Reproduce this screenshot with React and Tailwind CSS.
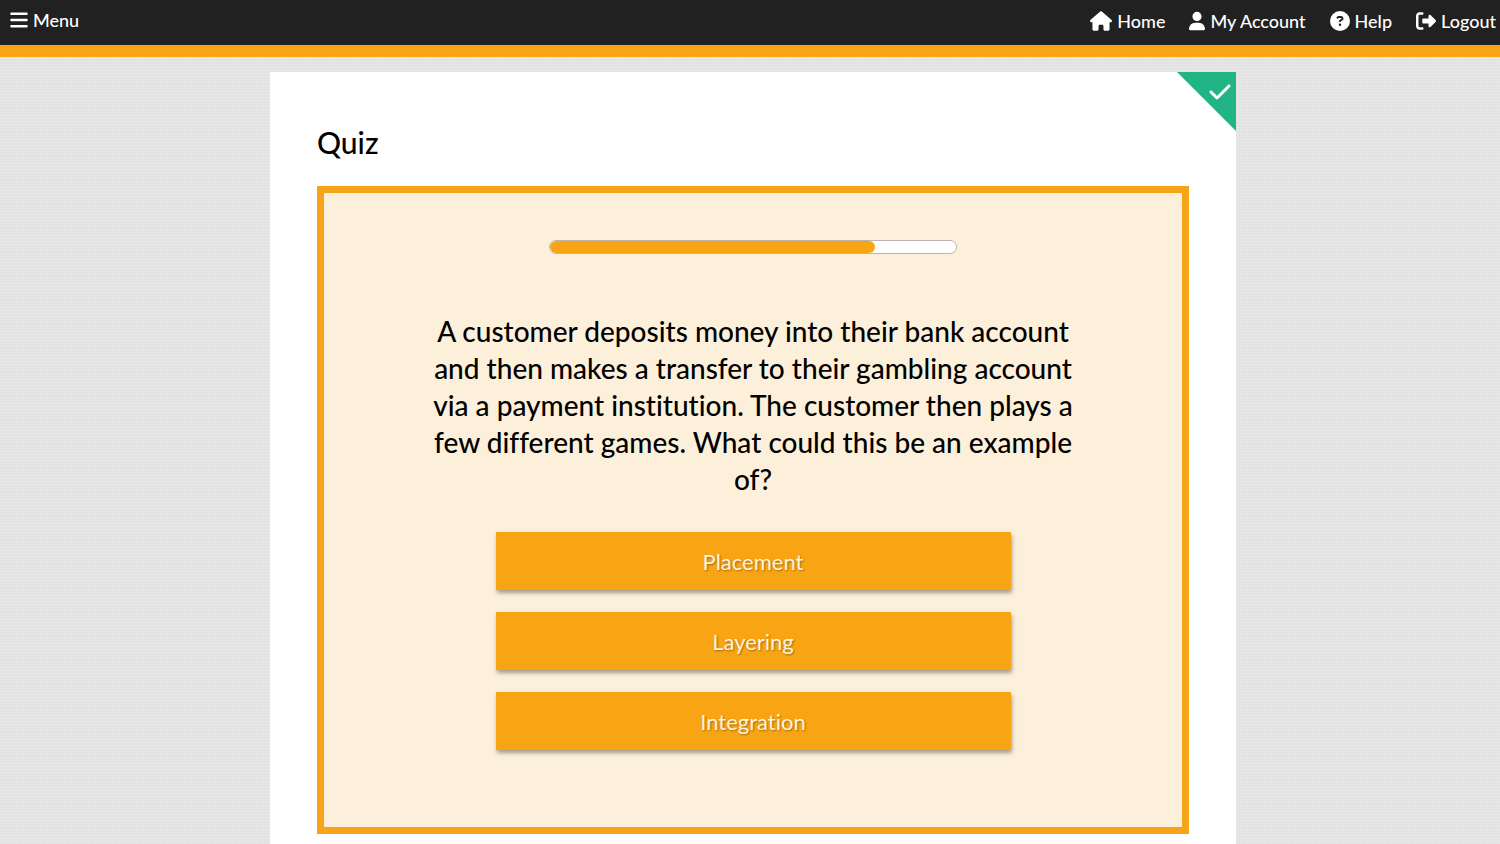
import { FaBars, FaCheck, FaCircleQuestion, FaHouse, FaRightFromBracket, FaUser } from "react-icons/fa6";

const links = [
  { label: "Home", Icon: FaHouse, size: "w-[22px]" },
  { label: "My Account", Icon: FaUser, size: "w-4" },
  { label: "Help", Icon: FaCircleQuestion, size: "w-5" },
  { label: "Logout", Icon: FaRightFromBracket, size: "w-5" },
];

const answers = ["Placement", "Layering", "Integration"];

const weave =
  "bg-[#e4e4e4] bg-[repeating-linear-gradient(0deg,rgba(255,255,255,0.2)_0px_1px,transparent_1px_3px),repeating-linear-gradient(90deg,rgba(0,0,0,0.02)_0px_1px,transparent_1px_3px)]";

export default function App() {
  return (
    <div
      className={`flex min-h-screen flex-col font-['Lato',sans-serif] text-black [font-variant-ligatures:none] ${weave}`}
    >
      <header className="flex h-[57px] items-start justify-between border-b-12 border-[#f9a413] bg-[#212121] pr-1 pl-[10px] text-[18px] leading-6 font-medium text-white">
        <button type="button" className="mt-2 flex items-center gap-[5px]">
          <FaBars className="h-5 w-[18px]" aria-hidden="true" />
          Menu
        </button>
        <nav className="mt-[9px] flex gap-6">
          {links.map(({ label, Icon, size }) => (
            <a key={label} href="#" className="flex items-center gap-[5px]">
              <Icon className={`h-5 ${size}`} aria-hidden="true" />
              {label}
            </a>
          ))}
        </nav>
      </header>

      <main className="flex grow justify-center pt-[15px] pl-[6px]">
        <section className="relative w-full max-w-[966px] bg-white px-[47px] pt-[51px] pb-[11px]">
          <div className="absolute top-0 right-0 size-[59px] bg-[#21b585] [clip-path:polygon(0_0,100%_0,100%_100%)]">
            <FaCheck className="absolute top-2 right-1 size-6 text-white" aria-label="Completed" />
          </div>

          <h1 className="text-[30px] leading-[38px] font-medium">Quiz</h1>

          <div className="mt-[25px] flex min-h-[648px] flex-col items-center border-7 border-[#f7a41b] bg-[#fdf0db] px-6 pt-[47px] pb-[76px]">
            <div
              role="progressbar"
              aria-label="Quiz progress"
              aria-valuenow={80}
              aria-valuemin={0}
              aria-valuemax={100}
              className="h-[14px] w-full max-w-[408px] overflow-hidden rounded-full border border-[#b9b5ae] bg-white"
            >
              <div className="h-full w-4/5 rounded-full bg-[#f9a413]" />
            </div>

            <p className="mt-[59px] max-w-[660px] text-center text-[28px] leading-[37px] font-medium">
              A customer deposits money into their bank account and then makes a transfer to their gambling account via
              a payment institution. The customer then plays a few different games. What could this be an example of?
            </p>

            <div className="mt-[34px] flex w-full max-w-[515px] flex-col gap-[22px]">
              {answers.map((answer) => (
                <button
                  key={answer}
                  type="button"
                  className="h-[58px] bg-[#f9a413] text-[22px] font-normal text-[#fff3dc] shadow-[1px_3px_4px_rgba(0,0,0,0.35)] [text-shadow:1px_1px_2px_rgba(0,0,0,0.35)]"
                >
                  {answer}
                </button>
              ))}
            </div>
          </div>
        </section>
      </main>
    </div>
  );
}
